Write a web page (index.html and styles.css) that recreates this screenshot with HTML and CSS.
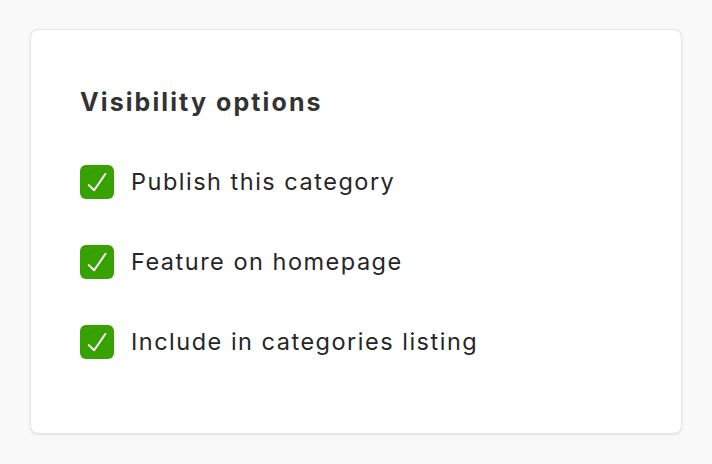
FILE: index.html
```html
<!DOCTYPE html>
<html lang="en">
<head>
    <meta charset="UTF-8">
    <meta name="viewport" content="width=device-width, initial-scale=1.0">
    <title>Visibility options</title>
    <link rel="stylesheet" href="styles.css">
</head>
<body>
    <div class="card">
        <h2 class="card-title">Visibility options</h2>
        <ul class="options">
            <li class="option">
                <span class="check">
                    <svg viewBox="0 0 24 24"><path d="M6.2 14.2 L10 17.8 L18 6.2"/></svg>
                </span>
                <span class="label">Publish this category</span>
            </li>
            <li class="option">
                <span class="check">
                    <svg viewBox="0 0 24 24"><path d="M6.2 14.2 L10 17.8 L18 6.2"/></svg>
                </span>
                <span class="label">Feature on homepage</span>
            </li>
            <li class="option">
                <span class="check">
                    <svg viewBox="0 0 24 24"><path d="M6.2 14.2 L10 17.8 L18 6.2"/></svg>
                </span>
                <span class="label">Include in categories listing</span>
            </li>
        </ul>
    </div>
</body>
</html>
```

FILE: styles.css
```css
body {
    font-family: Inter, "Noto Sans", sans-serif;
    margin: 0;
    padding: 29px 30px;
    background-color: #f9f9f9;
    color: #222;
}

.card {
    background-color: #fff;
    border: 1px solid #e4e4e4;
    border-radius: 8px;
    box-shadow: 0 1px 3px rgba(0, 0, 0, 0.08);
    padding: 56px 49px 74px;
    height: 405px;
    box-sizing: border-box;
}

.card-title {
    font-size: 25px;
    font-weight: 700;
    letter-spacing: 2.1px;
    line-height: 32px;
    color: #333;
    margin: 0 0 47px;
}

.options {
    list-style: none;
    margin: 0;
    padding: 0;
    display: flex;
    flex-direction: column;
    gap: 46px;
}

.option {
    display: flex;
    align-items: center;
    gap: 17px;
}

.check {
    width: 34px;
    height: 34px;
    border-radius: 6px;
    background-color: #38a102;
    display: flex;
    flex-shrink: 0;
}

.check svg {
    width: 34px;
    height: 34px;
    fill: none;
    stroke: #fff;
    stroke-width: 1.4;
    stroke-linecap: round;
    stroke-linejoin: round;
}

.label {
    font-size: 23.5px;
    font-weight: 400;
    letter-spacing: 1.5px;
    line-height: 34px;
    color: #262626;
}
```
